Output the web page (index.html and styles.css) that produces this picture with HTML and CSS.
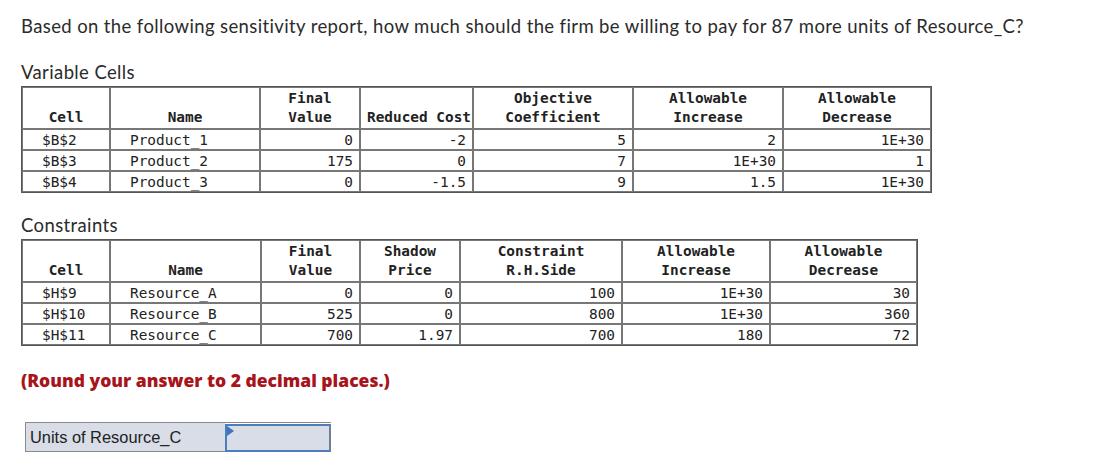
FILE: index.html
```html
<!DOCTYPE html>
<html>
<head>
<meta charset="utf-8">
<link rel="stylesheet" href="styles.css">
</head>
<body>
<div class="page">
  <p class="question">Based on the following sensitivity report, how much should the firm be willing to pay for 87 more units of Resource_C?</p>

  <h3 class="section">Variable Cells</h3>
  <table class="report t1">
    <colgroup>
      <col class="c1"><col class="c2"><col class="c3"><col class="c4"><col class="c5"><col class="c6"><col class="c7">
    </colgroup>
    <tr class="head">
      <th>Cell</th><th>Name</th><th>Final<br>Value</th><th>Reduced Cost</th><th>Objective<br>Coefficient</th><th>Allowable<br>Increase</th><th>Allowable<br>Decrease</th>
    </tr>
    <tr><td class="lt">$B$2</td><td class="lt">Product_1</td><td>0</td><td>-2</td><td>5</td><td>2</td><td>1E+30</td></tr>
    <tr><td class="lt">$B$3</td><td class="lt">Product_2</td><td>175</td><td>0</td><td>7</td><td>1E+30</td><td>1</td></tr>
    <tr><td class="lt">$B$4</td><td class="lt">Product_3</td><td>0</td><td>-1.5</td><td>9</td><td>1.5</td><td>1E+30</td></tr>
  </table>

  <h3 class="section constraints">Constraints</h3>
  <table class="report t2">
    <colgroup>
      <col class="c1"><col class="c2"><col class="c3"><col class="c4"><col class="c5"><col class="c6"><col class="c7">
    </colgroup>
    <tr class="head">
      <th>Cell</th><th>Name</th><th>Final<br>Value</th><th>Shadow<br>Price</th><th>Constraint<br>R.H.Side</th><th>Allowable<br>Increase</th><th>Allowable<br>Decrease</th>
    </tr>
    <tr><td class="lt">$H$9</td><td class="lt">Resource_A</td><td>0</td><td>0</td><td>100</td><td>1E+30</td><td>30</td></tr>
    <tr><td class="lt">$H$10</td><td class="lt">Resource_B</td><td>525</td><td>0</td><td>800</td><td>1E+30</td><td>360</td></tr>
    <tr><td class="lt">$H$11</td><td class="lt">Resource_C</td><td>700</td><td>1.97</td><td>700</td><td>180</td><td>72</td></tr>
  </table>

  <p class="note">(Round your answer to 2 decimal places.)</p>

  <div class="answer">
    <div class="label">Units of Resource_C</div>
    <div class="field"><span class="flag"></span></div>
  </div>
</div>
</body>
</html>
```

FILE: styles.css
```css
html, body {
  margin: 0;
  padding: 0;
  background: #ffffff;
}

.page {
  padding: 14px 0 0 21px;
  font-family: "Lato", "Noto Sans", sans-serif;
  color: #2b2b2b;
}

.question {
  margin: 0;
  font-size: 18.5px;
  line-height: 24px;
  letter-spacing: 0.38px;
}

.section {
  margin: 22px 0 0 0;
  font-weight: normal;
  font-size: 18.5px;
  line-height: 24px;
  letter-spacing: 0.38px;
}

.section.constraints {
  margin-top: 20px;
}

.report {
  border-collapse: separate;
  border-spacing: 0;
  border: 1px solid #555;
  table-layout: fixed;
  font-family: "DejaVu Sans Mono", monospace;
  font-size: 14.4px;
  color: #222;
  margin-top: 2px;
}

.t1 { width: 911px; }
.t2 { width: 897px; }

.t1 .c1 { width: 88px; }
.t1 .c2 { width: 150px; }
.t1 .c3 { width: 100px; }
.t1 .c4 { width: 113px; }
.t1 .c5 { width: 160px; }
.t1 .c6 { width: 150px; }
.t1 .c7 { width: 148px; }

.t2 .c1 { width: 88px; }
.t2 .c2 { width: 151px; }
.t2 .c3 { width: 99px; }
.t2 .c4 { width: 100px; }
.t2 .c5 { width: 162px; }
.t2 .c6 { width: 148px; }
.t2 .c7 { width: 147px; }

.report th,
.report td {
  border: 1px solid #777;
  padding: 0 6px;
  white-space: nowrap;
}

.report th {
  height: 39px;
  line-height: 19px;
  font-weight: bold;
  text-align: center;
  vertical-align: bottom;
  padding-bottom: 1px;
}

.report td {
  height: 18px;
  line-height: 18px;
  text-align: right;
  vertical-align: top;
  padding-top: 1px;
}

.report td.lt {
  text-align: left;
  padding-left: 19px;
}

.note {
  margin: 22px 0 0 0;
  font-family: "Open Sans", "Lato", sans-serif;
  font-size: 17.5px;
  line-height: 24px;
  font-weight: 800;
  color: #a8141b;
}

.answer {
  display: flex;
  margin: 30px 0 0 4px;
  width: 306px;
  height: 29px;
  border-top: 1px solid #8a8a8a;
}

.label {
  width: 200px;
  background: #d8dde7;
  border-left: 1px solid #8a8a8a;
  border-bottom: 1px solid #8a8a8a;
  font-family: "Liberation Sans", Arial, sans-serif;
  font-size: 16.4px;
  line-height: 28px;
  padding-left: 4px;
  color: #222;
  box-sizing: border-box;
}

.field {
  position: relative;
  flex: 1;
  background: #d8dde7;
  border: 2px solid #4d7dbd;
  box-sizing: border-box;
  margin-top: 1px;
  border-right-color: #6f7f96;
}

.flag {
  position: absolute;
  left: 0;
  top: 0;
  width: 0;
  height: 0;
  border-top: 5px solid transparent;
  border-bottom: 5px solid transparent;
  border-left: 7px solid #3f75c0;
}
```
